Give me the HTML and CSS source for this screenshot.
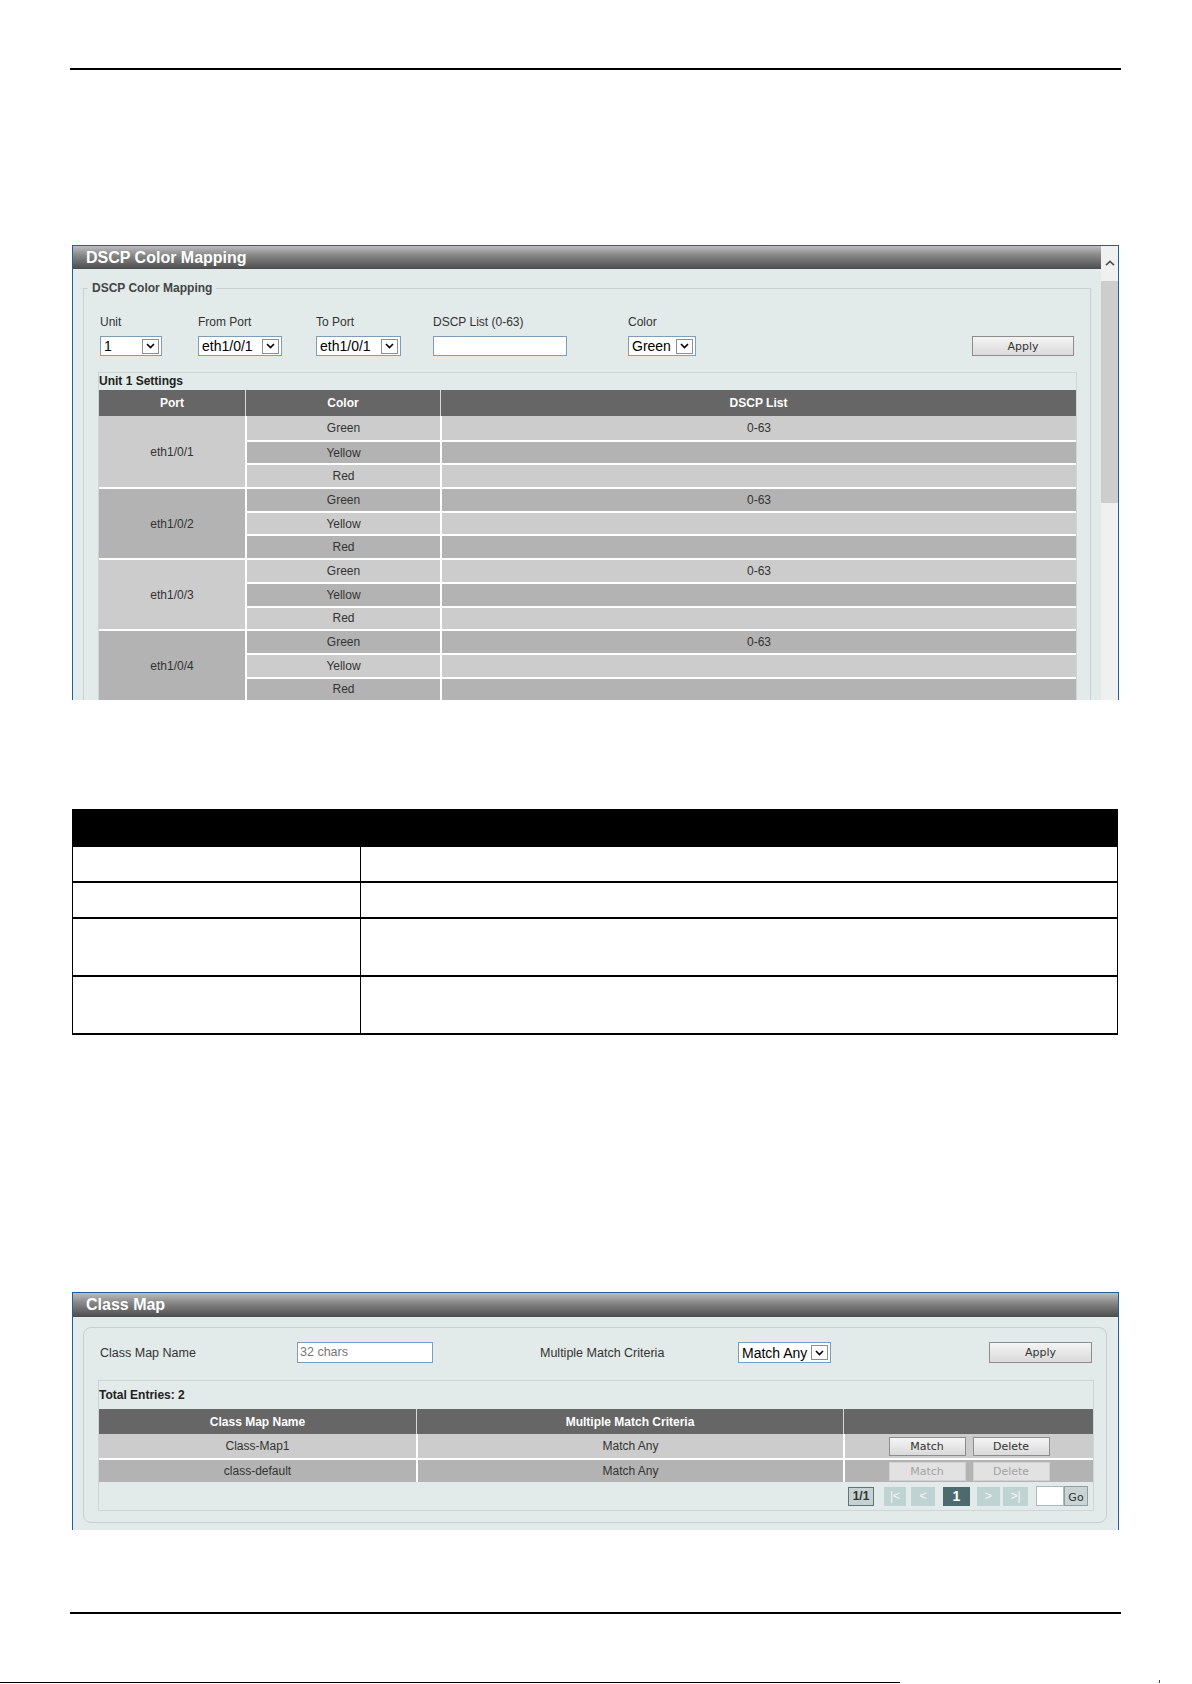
FILE: index.html
```html
<!DOCTYPE html>
<html lang="en">
<head>
  <meta charset="UTF-8" />
  <meta name="viewport" content="width=device-width, initial-scale=1" />
  <title>DSCP Color Mapping</title>
  <link rel="stylesheet" href="styles.css">
</head>
<body>
  <div class="page">
    <div class="rule rule-top"></div>

    <!-- DSCP Color Mapping frame -->
    <div class="panel panel-dscp">
      <div class="panel-main">
        <div class="panel-title">DSCP Color Mapping</div>
        <fieldset class="group">
          <legend>DSCP Color Mapping</legend>
          <div class="form-row">
            <div class="field col-unit">
              <label>Unit</label>
              <div class="select w-unit"><span>1</span><span class="arrow"><svg width="9" height="6" viewBox="0 0 9 6"><path d="M1 1l3.5 3.5L8 1" fill="none" stroke="#000" stroke-width="1.6"/></svg></span></div>
            </div>
            <div class="field col-from">
              <label>From Port</label>
              <div class="select w-from"><span>eth1/0/1</span><span class="arrow"><svg width="9" height="6" viewBox="0 0 9 6"><path d="M1 1l3.5 3.5L8 1" fill="none" stroke="#000" stroke-width="1.6"/></svg></span></div>
            </div>
            <div class="field col-to">
              <label>To Port</label>
              <div class="select w-to"><span>eth1/0/1</span><span class="arrow"><svg width="9" height="6" viewBox="0 0 9 6"><path d="M1 1l3.5 3.5L8 1" fill="none" stroke="#000" stroke-width="1.6"/></svg></span></div>
            </div>
            <div class="field col-dscp">
              <label>DSCP List (0-63)</label>
              <div class="text-input w-dscp"></div>
            </div>
            <div class="field col-color">
              <label>Color</label>
              <div class="select w-color"><span>Green</span><span class="arrow"><svg width="9" height="6" viewBox="0 0 9 6"><path d="M1 1l3.5 3.5L8 1" fill="none" stroke="#000" stroke-width="1.6"/></svg></span></div>
            </div>
            <button class="btn btn-apply">Apply</button>
          </div>

          <div class="box settings">
            <div class="box-title">Unit 1 Settings</div>
            <table class="grid color-table">
              <thead>
                <tr><th class="h-port">Port</th><th class="h-color">Color</th><th>DSCP List</th></tr>
              </thead>
              <tbody>
                <tr class="r lt"><td class="port p-lt" rowspan="3">eth1/0/1</td><td class="sep">Green</td><td class="sep">0-63</td></tr>
                <tr class="r dk"><td class="sep">Yellow</td><td class="sep"></td></tr>
                <tr class="r lt"><td class="sep">Red</td><td class="sep"></td></tr>
                <tr class="r dk"><td class="port p-dk" rowspan="3">eth1/0/2</td><td class="sep">Green</td><td class="sep">0-63</td></tr>
                <tr class="r lt"><td class="sep">Yellow</td><td class="sep"></td></tr>
                <tr class="r dk"><td class="sep">Red</td><td class="sep"></td></tr>
                <tr class="r lt"><td class="port p-lt" rowspan="3">eth1/0/3</td><td class="sep">Green</td><td class="sep">0-63</td></tr>
                <tr class="r dk"><td class="sep">Yellow</td><td class="sep"></td></tr>
                <tr class="r lt"><td class="sep">Red</td><td class="sep"></td></tr>
                <tr class="r dk"><td class="port p-dk" rowspan="3">eth1/0/4</td><td class="sep">Green</td><td class="sep">0-63</td></tr>
                <tr class="r lt"><td class="sep">Yellow</td><td class="sep"></td></tr>
                <tr class="r dk"><td class="sep">Red</td><td class="sep"></td></tr>
              </tbody>
            </table>
          </div>
        </fieldset>
      </div>
      <div class="scrollbar">
        <div class="scroll-up"><svg width="10" height="6" viewBox="0 0 10 6"><path d="M1 5.2L5 1.4l4 3.8" fill="none" stroke="#505050" stroke-width="1.6"/></svg></div>
        <div class="scroll-thumb"></div>
      </div>
    </div>

    <!-- parameter description table -->
    <table class="param-table">
      <tr><th class="h-param"></th><th></th></tr>
      <tr class="short"><td class="c-param"></td><td></td></tr>
      <tr class="short"><td class="c-param"></td><td></td></tr>
      <tr class="tall"><td class="c-param"></td><td></td></tr>
      <tr class="tall"><td class="c-param"></td><td></td></tr>
    </table>

    <!-- Class Map frame -->
    <div class="panel panel-class">
      <div class="panel-title">Class Map</div>
      <div class="class-group">
        <div class="class-form">
          <span class="cf-label1">Class Map Name</span>
          <div class="text-input w-name"><span class="placeholder">32 chars</span></div>
          <span class="cf-label2">Multiple Match Criteria</span>
          <div class="select w-match"><span>Match Any</span><span class="arrow"><svg width="9" height="6" viewBox="0 0 9 6"><path d="M1 1l3.5 3.5L8 1" fill="none" stroke="#000" stroke-width="1.6"/></svg></span></div>
          <button class="btn btn-apply2">Apply</button>
        </div>

        <div class="box entries">
          <div class="box-title entries-title">Total Entries: 2</div>
          <table class="grid class-table">
            <thead>
              <tr><th class="h-name">Class Map Name</th><th class="h-crit">Multiple Match Criteria</th><th></th></tr>
            </thead>
            <tbody>
              <tr class="r lt">
                <td>Class-Map1</td><td class="sep">Match Any</td>
                <td class="sep"><div class="actions"><button class="btn btn-sm">Match</button><button class="btn btn-sm">Delete</button></div></td>
              </tr>
              <tr class="r dk">
                <td>class-default</td><td class="sep">Match Any</td>
                <td class="sep"><div class="actions"><button class="btn btn-sm" disabled>Match</button><button class="btn btn-sm" disabled>Delete</button></div></td>
              </tr>
            </tbody>
          </table>
          <div class="pager">
            <span class="pg pg-count">1/1</span>
            <span class="pg pg-nav pg-first">|&lt;</span>
            <span class="pg pg-nav pg-prev">&lt;</span>
            <span class="pg pg-cur">1</span>
            <span class="pg pg-nav pg-next">&gt;</span>
            <span class="pg pg-nav pg-last">&gt;|</span>
            <span class="pg pg-input"></span>
            <span class="pg pg-go">Go</span>
          </div>
        </div>
      </div>
    </div>

    <div class="rule rule-bottom"></div>
    <div class="page-edge"><span class="edge-line"></span><span class="edge-tick"></span></div>
  </div>
</body>
</html>
```

FILE: styles.css
```css
body {
  margin: 0;
  background: #fff;
  font-family: "Liberation Sans", Arial, sans-serif;
  color: #333;
}
.page {
  width: 1051px;
  margin-left: 70px;
}
.rule {
  height: 2px;
  background: #000;
}
.rule-top {
  margin-top: 68px;
}
.rule-bottom {
  margin-top: 82px;
}
.page-edge {
  display: flex;
  align-items: flex-end;
  width: 1180px;
  height: 3px;
  margin: 66px 0 0 -70px;
}
.edge-line {
  flex: none;
  width: 900px;
  height: 1px;
  background: #000;
}
.edge-tick {
  flex: none;
  width: 1px;
  height: 3px;
  margin-left: 259px;
  background: #444;
}

/* Framed web-UI panels */
.panel {
  width: 1047px;
  margin-left: 2px;
  box-sizing: border-box;
  border: 1px solid #1d5f9f;
  border-bottom: none;
  background: #e2eaea;
  overflow: hidden;
}
.panel-title {
  height: 23px;
  line-height: 23px;
  padding-left: 13px;
  font-size: 16px;
  font-weight: bold;
  color: #fff;
  background: linear-gradient(to bottom, #bdbdbd 0%, #888 40%, #4c4c4c 100%);
}
.panel-dscp {
  display: flex;
  height: 455px;
  margin-top: 175px;
}
.panel-main {
  flex: 1;
  min-width: 0;
}
.scrollbar {
  flex: none;
  width: 17px;
  background: #f0f0f0;
}
.scroll-up {
  height: 35px;
  display: flex;
  align-items: flex-end;
  justify-content: center;
  padding-bottom: 15px;
  box-sizing: border-box;
}
.scroll-up svg {
  display: block;
}
.scroll-thumb {
  height: 222px;
  background: #cdcdcd;
}

/* DSCP form */
.group {
  margin: 12px 10px 0;
  padding: 0;
  min-width: 0;
  border: 1px solid #c7d1d1;
}
.group legend {
  margin-left: 4px;
  padding: 0 4px;
  font-size: 12px;
  line-height: 14px;
  font-weight: bold;
  color: #444;
}
.form-row {
  display: flex;
  align-items: flex-end;
  padding: 20px 16px 0;
}
.field {
  display: flex;
  flex-direction: column;
  align-items: flex-start;
  gap: 7px;
}
.field label {
  font-size: 12px;
  line-height: 14px;
}
.col-unit { width: 98px; }
.col-from { width: 118px; }
.col-to { width: 117px; }
.col-dscp { width: 195px; }
.col-color { flex: 1; }

.select {
  display: flex;
  align-items: center;
  justify-content: space-between;
  height: 20px;
  box-sizing: border-box;
  padding-left: 3px;
  border: 1px solid #7f9db9;
  background: #fff;
  font-size: 14px;
  color: #000;
}
.arrow {
  display: flex;
  align-items: center;
  justify-content: center;
  width: 17px;
  height: 15px;
  margin-right: 2px;
  box-sizing: border-box;
  border: 1px solid #8f8f8f;
  background: #fff;
}
.arrow svg {
  display: block;
}
.w-unit { width: 62px; }
.w-from { width: 84px; }
.w-to { width: 85px; }
.w-color { width: 68px; }
.w-match { width: 93px; height: 21px; }

.text-input {
  height: 20px;
  box-sizing: border-box;
  border: 1px solid #7f9db9;
  background: #fff;
}
.w-dscp { width: 134px; }
.w-name {
  width: 136px;
  height: 21px;
  padding-left: 2px;
  line-height: 19px;
}
.placeholder {
  color: #777;
  font-size: 12.5px;
}

.btn {
  height: 20px;
  padding: 0;
  font-family: "DejaVu Sans", sans-serif;
  font-size: 11px;
  color: #333;
  background: linear-gradient(to bottom, #f4f4f4, #dadada);
  border: 1px solid #8d8d8d;
  border-radius: 0;
}
.btn-apply {
  width: 102px;
}
.btn-apply2 {
  width: 103px;
  height: 21px;
  margin-left: auto;
}
.btn-sm {
  width: 77px;
  height: 19px;
}
.btn-sm:disabled {
  background: #e2e2e2;
  border-color: #d0d0d0;
  color: #a3a3a3;
}

/* Boxed tables */
.box {
  border: 1px solid #cdd6d6;
}
.box-title {
  font-size: 12px;
  line-height: 17px;
  font-weight: bold;
  color: #222;
}
.settings {
  margin: 16px 13px 0 14px;
}
.grid {
  width: 100%;
  table-layout: fixed;
  border-collapse: separate;
  border-spacing: 0;
}
.grid th {
  height: 25px;
  padding: 0;
  background: #666;
  color: #fff;
  font-size: 12px;
  font-weight: bold;
  box-sizing: border-box;
}
.color-table th {
  height: 26px;
}
.grid th + th {
  border-left: 1px solid #d8d8d8;
}
.grid td {
  padding: 0;
  font-size: 12px;
  color: #333;
  text-align: center;
}
.grid td.sep {
  border-left: 2px solid #fff;
}
.lt > td { background: #ccc; }
.dk > td { background: #b3b3b3; }
.grid td.p-lt { background: #ccc; }
.grid td.p-dk { background: #b3b3b3; }
.grid tr.r + tr.r > td {
  border-top: 2px solid #fff;
}
.color-table tr.r {
  height: 23.7px;
}
.h-port { width: 146px; }
.h-color { width: 195px; }

/* Parameter table */
.param-table {
  width: 1046px;
  margin: 109px 0 0 2px;
  table-layout: fixed;
  border-collapse: separate;
  border-spacing: 0;
  border: solid #000;
  border-width: 0 1px 2px;
}
.param-table th {
  height: 36px;
  padding: 0;
  background: #000;
}
.param-table .h-param {
  width: 288px;
}
.param-table td {
  padding: 0;
  border-top: 2px solid #000;
}
.param-table td.c-param {
  border-right: 1px solid #000;
}
.param-table tr.short { height: 36px; }
.param-table tr.tall { height: 58px; }

/* Class Map frame */
.panel-class {
  height: 238px;
  margin-top: 257px;
}
.panel-class .panel-title {
  height: 24px;
  line-height: 24px;
}
.class-group {
  margin: 10px 11px 0 10px;
  padding: 14px 12px 11px 14px;
  border: 1px solid #c5d0d0;
  border-radius: 8px;
}
.class-form {
  display: flex;
  align-items: center;
  height: 21px;
  padding: 0 2px;
  font-size: 12.5px;
}
.cf-label1 {
  width: 197px;
}
.cf-label2 {
  width: 198px;
  margin-left: 107px;
}
.entries {
  margin-top: 17px;
}
.entries-title {
  line-height: 28px;
}
.h-name { width: 317px; }
.h-crit { width: 427px; }
.class-table tr.r {
  height: 24px;
}
.actions {
  display: flex;
  justify-content: center;
  gap: 7px;
}

/* Pager */
.pager {
  display: flex;
  align-items: center;
  justify-content: flex-end;
  height: 28px;
  padding-right: 5px;
  font-size: 12px;
}
.pg {
  display: flex;
  align-items: center;
  justify-content: center;
  height: 19px;
  box-sizing: border-box;
}
.pg-count {
  width: 26px;
  border: 1px solid #5f7474;
  background: #c6d2d2;
  font-weight: bold;
  color: #333;
}
.pg-nav {
  background: #c0d3d3;
  color: #f4f8f8;
}
.pg-first { width: 22px; margin-left: 10px; }
.pg-prev { width: 24px; margin-left: 5px; }
.pg-cur {
  width: 27px;
  margin-left: 8px;
  background: #4d6b6e;
  color: #fff;
  font-weight: bold;
  font-size: 14px;
}
.pg-next { width: 23px; margin-left: 7px; }
.pg-last { width: 25px; margin-left: 3px; }
.pg-input {
  width: 28px;
  height: 20px;
  margin-left: 8px;
  background: #fff;
  border: 1px solid #aab9b9;
}
.pg-go {
  width: 24px;
  height: 20px;
  padding-top: 3px;
  background: #c9d4d4;
  border: 1px solid #8fa0a0;
  font-family: "DejaVu Sans", sans-serif;
  font-size: 11px;
  color: #333;
}
```
